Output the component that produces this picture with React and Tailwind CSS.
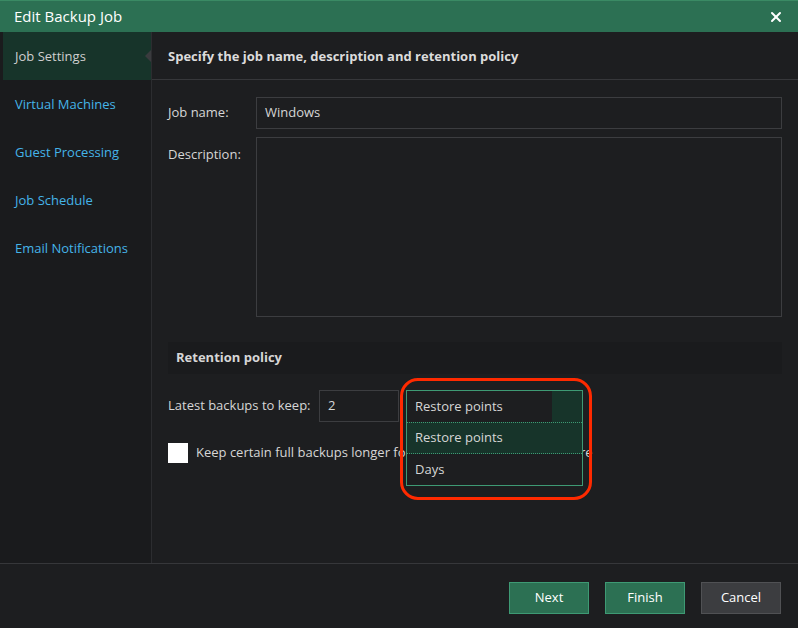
import { X } from "lucide-react";

const nav = ["Virtual Machines", "Guest Processing", "Job Schedule", "Email Notifications"];

export default function App() {
  return (
    <div className="w-[798px] h-[628px] flex flex-col bg-[#1d1e20] text-[13px] text-[#d6d6d6] overflow-hidden" style={{ fontFamily: "'Open Sans', 'Noto Sans', sans-serif" }}>
      <div className="h-8 shrink-0 bg-[#2c7053] flex items-center justify-between px-[14px] border-t border-[#3a8a64]">
        <span className="text-[15px] text-white">Edit Backup Job</span>
        <X className="w-4 h-4 text-white" strokeWidth={3} />
      </div>
      <div className="flex flex-1 min-h-0">
        <div className="w-[152px] shrink-0 bg-[#1a1b1d] border-r border-[#2c2d30] pl-[3px]">
          <div className="h-12 bg-[#17342a] flex items-center pl-3 pt-[2px] text-[#cfcfcf] relative">
            Job Settings
            <div className="absolute right-0 top-[18px] w-0 h-0 border-y-[6px] border-y-transparent border-r-[6px] border-r-[#3a3b3e]" />
          </div>
          {nav.map((n) => (
            <div key={n} className="h-12 flex items-center pl-3 pt-[2px] text-[#45b4e8]">{n}</div>
          ))}
        </div>
        <div className="flex-1 flex flex-col">
          <div className="h-12 shrink-0 border-b border-[#36373a] flex items-center pl-4 pt-[2px] font-bold text-[#dcdcdc]">Specify the job name, description and retention policy</div>
          <div className="px-4 pt-[17px] flex-1">
            <div className="flex items-center gap-0">
              <span className="w-[88px]">Job name:</span>
              <div className="flex-1 h-8 border border-[#3c3d40] flex items-center px-2">Windows</div>
            </div>
            <div className="flex mt-2">
              <span className="w-[88px] pt-[8px]">Description:</span>
              <div className="flex-1 h-[180px] border border-[#3c3d40]" />
            </div>
            <div className="mt-[25px] h-8 bg-[#1a1b1d] flex items-center pl-2 font-bold">Retention policy</div>
            <div className="relative mt-[16px] flex items-center">
              <span className="w-[151px]">Latest backups to keep:</span>
              <div className="w-[80px] h-8 border border-[#3c3d40] flex items-center px-2">2</div>
              <div className="absolute left-[238px] top-0 z-10 w-[177px] border border-[#3e9a74] bg-[#1d1e20]">
                <div className="h-[31px] flex">
                  <div className="flex-1 flex items-center px-2">Restore points</div>
                  <div className="w-[30px] bg-[#17342a]" />
                </div>
                <div className="h-8 bg-[#17342a] border-y border-dotted border-[#3e9a74] flex items-center px-2">Restore points</div>
                <div className="h-[31px] flex items-center px-2">Days</div>
              </div>
              <div className="absolute left-[232px] -top-[12px] z-20 w-[192px] h-[122px] rounded-[18px] border-[3px] border-[#ff2a00]" />
            </div>
            <div className="flex items-center mt-[21px]">
              <div className="w-5 h-5 bg-white mr-2" />
              <span>Keep certain full backups longer for archival purposes</span>
              <span className="ml-[12px]">Configure</span>
            </div>
          </div>
        </div>
      </div>
      <div className="h-[65px] shrink-0 border-t border-[#36373a] flex items-center justify-end gap-4 pr-[17px] pt-[3px] text-white">
        <div className="w-20 h-8 bg-[#2c7053] border border-[#3e9a74] flex items-center justify-center">Next</div>
        <div className="w-20 h-8 bg-[#2c7053] border border-[#3e9a74] flex items-center justify-center">Finish</div>
        <div className="w-20 h-8 bg-[#3c3d40] border border-[#505154] flex items-center justify-center">Cancel</div>
      </div>
    </div>
  );
}
